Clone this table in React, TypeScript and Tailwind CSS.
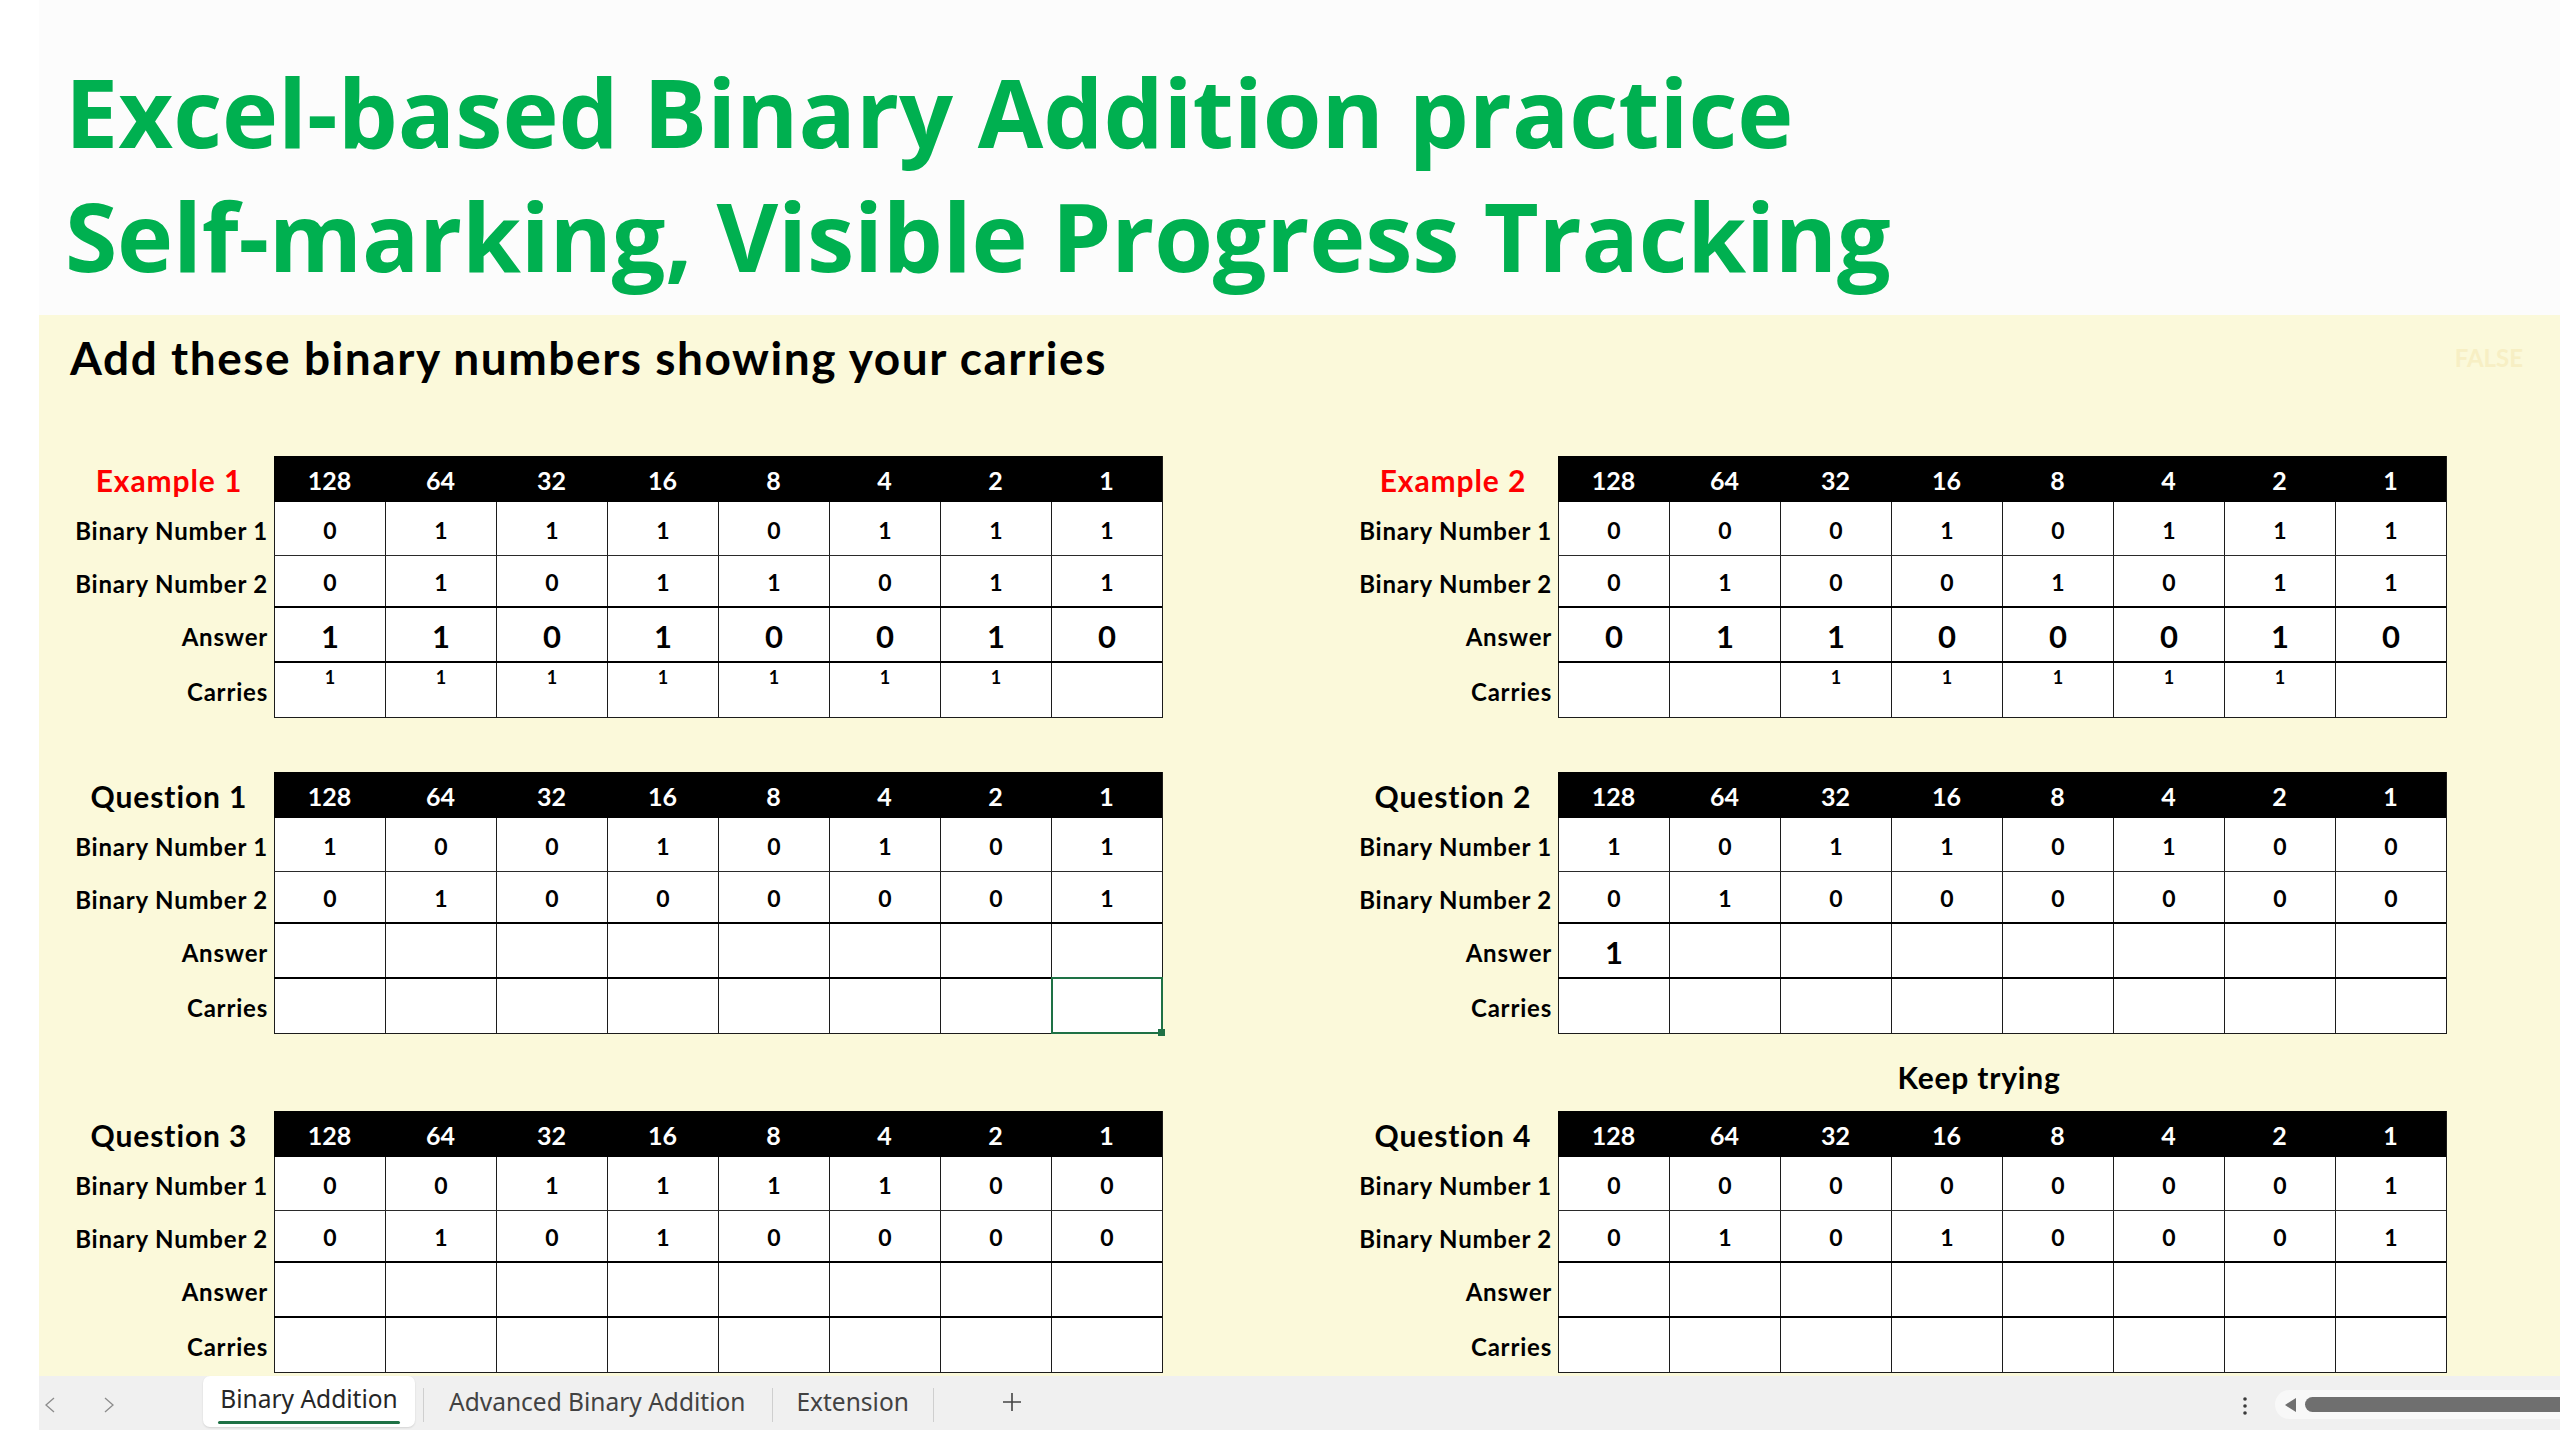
import React from "react";

type Block = {
  title: string;
  red?: boolean;
  b1: string;
  b2: string;
  ans: string;
  car: string;
  selected?: boolean;
};

const COLS = ["128", "64", "32", "16", "8", "4", "2", "1"];

const ex1: Block = { title: "Example 1", red: true, b1: "01110111", b2: "01011011", ans: "11010010", car: "1111111 " };
const ex2: Block = { title: "Example 2", red: true, b1: "00010111", b2: "01001011", ans: "01100010", car: "  11111 " };
const q1: Block = { title: "Question 1", b1: "10010101", b2: "01000001", ans: "        ", car: "        ", selected: true };
const q2: Block = { title: "Question 2", b1: "10110100", b2: "01000000", ans: "1       ", car: "        " };
const q3: Block = { title: "Question 3", b1: "00111100", b2: "01010000", ans: "        ", car: "        " };
const q4: Block = { title: "Question 4", b1: "00000001", b2: "01010001", ans: "        ", car: "        " };

function RowLabel({ h, children }: { h: string; children: React.ReactNode }) {
  return (
    <div className={`${h} flex items-center justify-end pr-[6px] pt-[3px] text-[24px] tracking-[0.8px] leading-none font-bold text-black whitespace-nowrap`}>
      {children}
    </div>
  );
}

function DataRow({ vals, h, border, size }: { vals: string; h: string; border: string; size: string }) {
  return (
    <div className={`${h} ${border} grid grid-cols-[repeat(8,111px)] bg-white`}>
      {vals.split("").map((v, i) => (
        <div key={i} className={`border-l border-[#1c1c1c] flex items-center justify-center pt-[3px] ${size} leading-none font-bold text-black`}>
          {v.trim()}
        </div>
      ))}
    </div>
  );
}

function Table({ b }: { b: Block }) {
  return (
    <div className="flex shrink-0">
      <div className="w-[210px] flex flex-col">
        <div className={`h-[46px] flex items-center justify-center pt-[2px] text-[30px] tracking-[0.9px] leading-none font-bold whitespace-nowrap ${b.red ? "text-[#ff0000]" : "text-black"}`}>
          {b.title}
        </div>
        <RowLabel h="h-[54px]">Binary Number 1</RowLabel>
        <RowLabel h="h-[52px]">Binary Number 2</RowLabel>
        <RowLabel h="h-[55px]">Answer</RowLabel>
        <RowLabel h="h-[55px]">Carries</RowLabel>
      </div>
      <div className="border-r border-[#1c1c1c] flex flex-col">
        <div className="h-[46px] grid grid-cols-[repeat(8,111px)] bg-black">
          {COLS.map((c) => (
            <div key={c} className="flex items-center justify-center pt-[2px] text-[25px] leading-none font-bold text-white">
              {c}
            </div>
          ))}
        </div>
        <DataRow vals={b.b1} h="h-[54px]" border="border-b border-[#2a2a2a]" size="text-[23px]" />
        <DataRow vals={b.b2} h="h-[52px]" border="border-b-2 border-black" size="text-[23px]" />
        <DataRow vals={b.ans} h="h-[55px]" border="border-b-2 border-black" size="text-[31px]" />
        <div className="h-[55px] border-b border-[#1c1c1c] grid grid-cols-[repeat(8,111px)] bg-white">
          {b.car.split("").map((v, i) => (
            <div key={i} className="relative border-l border-[#1c1c1c] flex justify-center pt-[5px] text-[18px] leading-none font-bold text-black">
              {v.trim()}
              {b.selected && i === 7 && (
                <div className="absolute -left-px -top-[2px] -right-px -bottom-px border-2 border-[#1e7145]">
                  <div className="absolute -right-[4px] -bottom-[4px] w-[7px] h-[7px] bg-[#1e7145]" />
                </div>
              )}
            </div>
          ))}
        </div>
      </div>
    </div>
  );
}

function TableRow({ left, right, mt }: { left: Block; right: Block; mt: string }) {
  return (
    <div className={`${mt} pl-[25px] flex gap-[185px]`}>
      <Table b={left} />
      <Table b={right} />
    </div>
  );
}

function Chevron({ dir }: { dir: "l" | "r" }) {
  return (
    <svg width="12" height="16" viewBox="0 0 12 16" className="shrink-0">
      <polyline
        points={dir === "l" ? "10,1 2,8 10,15" : "2,1 10,8 2,15"}
        fill="none"
        stroke="#8c8c8c"
        strokeWidth="1.3"
      />
    </svg>
  );
}

export default function App() {
  return (
    <div className="w-[2560px] h-[1430px] overflow-hidden flex bg-white font-['Lato',sans-serif]">
      <div className="w-[39px] shrink-0 bg-white" />
      <div className="w-[2521px] shrink-0 flex flex-col">
        {/* Title */}
        <div className="h-[315px] shrink-0 bg-[#fcfcfc] pl-[26px] pt-[49px] font-['Open_Sans',sans-serif] text-[95px] leading-[124px] font-bold text-[#00b050] whitespace-nowrap">
          <div>Excel-based Binary Addition practice</div>
          <div className="tracking-[-0.2px]">Self-marking, Visible Progress Tracking</div>
        </div>

        {/* Sheet */}
        <div className="h-[1061px] shrink-0 bg-[#fbf9da] flex flex-col">
          <div className="mt-[20px] pl-[31px] pr-[37px] flex justify-between items-start">
            <div className="text-[46px] tracking-[1.55px] leading-none font-bold text-black whitespace-nowrap">
              Add these binary numbers showing your carries
            </div>
            <div className="mt-[11px] text-[24px] leading-none font-bold text-[#f7efc4]">FALSE</div>
          </div>

          <TableRow left={ex1} right={ex2} mt="mt-[75px]" />
          <TableRow left={q1} right={q2} mt="mt-[54px]" />
          <div className="h-[77px] pl-[25px] flex gap-[185px]">
            <div className="w-[1098px] shrink-0" />
            <div className="w-[1100px] shrink-0 pl-[164px] pt-[28px] text-center text-[30px] tracking-[0.8px] leading-none font-bold text-black">
              Keep trying
            </div>
          </div>
          <TableRow left={q3} right={q4} mt="mt-0" />
        </div>

        {/* Tab bar */}
        <div className="h-[54px] shrink-0 bg-[#f0f0f0] flex items-start font-['Noto_Sans',sans-serif] whitespace-nowrap">
          <div className="ml-[5px] mt-[21px]">
            <Chevron dir="l" />
          </div>
          <div className="ml-[47px] mt-[21px]">
            <Chevron dir="r" />
          </div>
          <div className="ml-[88px] w-[212px] h-[51px] shrink-0 bg-white rounded-[7px] shadow-[0_1px_2px_rgba(0,0,0,0.12)] flex flex-col items-center pt-[11px]">
            <div className="text-[24.5px] leading-none text-[#262626]">Binary Addition</div>
            <div className="mt-[9px] w-[182px] h-[3px] rounded-full bg-[#1e7145]" />
          </div>
          <div className="ml-[8px] mt-[12px] w-px h-[34px] bg-[#cfcfcf] shrink-0" />
          <div className="ml-[25px] mt-[14px] text-[24.5px] leading-none text-[#424242] shrink-0">Advanced Binary Addition</div>
          <div className="ml-[27px] mt-[12px] w-px h-[34px] bg-[#cfcfcf] shrink-0" />
          <div className="ml-[23px] mt-[14px] text-[24.5px] leading-none text-[#424242] shrink-0">Extension</div>
          <div className="ml-[24px] mt-[12px] w-px h-[34px] bg-[#cfcfcf] shrink-0" />
          <svg width="22" height="22" viewBox="0 0 22 22" className="ml-[67px] mt-[15px] shrink-0">
            <path d="M11 2v18M2 11h18" stroke="#444" strokeWidth="1.6" />
          </svg>
          <svg width="6" height="20" viewBox="0 0 6 20" className="ml-auto mt-[20px] shrink-0">
            <circle cx="3" cy="3" r="1.8" fill="#3a3a3a" />
            <circle cx="3" cy="10" r="1.8" fill="#3a3a3a" />
            <circle cx="3" cy="17" r="1.8" fill="#3a3a3a" />
          </svg>
          <div className="ml-[27px] mt-[14px] w-[285px] h-[29px] shrink-0 rounded-l-full bg-[#f8f8f8] flex items-center">
            <svg width="14" height="14" viewBox="0 0 14 14" className="ml-[8px] shrink-0">
              <polygon points="13,0 13,14 2,7" fill="#707070" />
            </svg>
            <div className="ml-[8px] flex-1 h-[15px] rounded-l-full bg-[#6f6f6f]" />
          </div>
        </div>
      </div>
    </div>
  );
}
